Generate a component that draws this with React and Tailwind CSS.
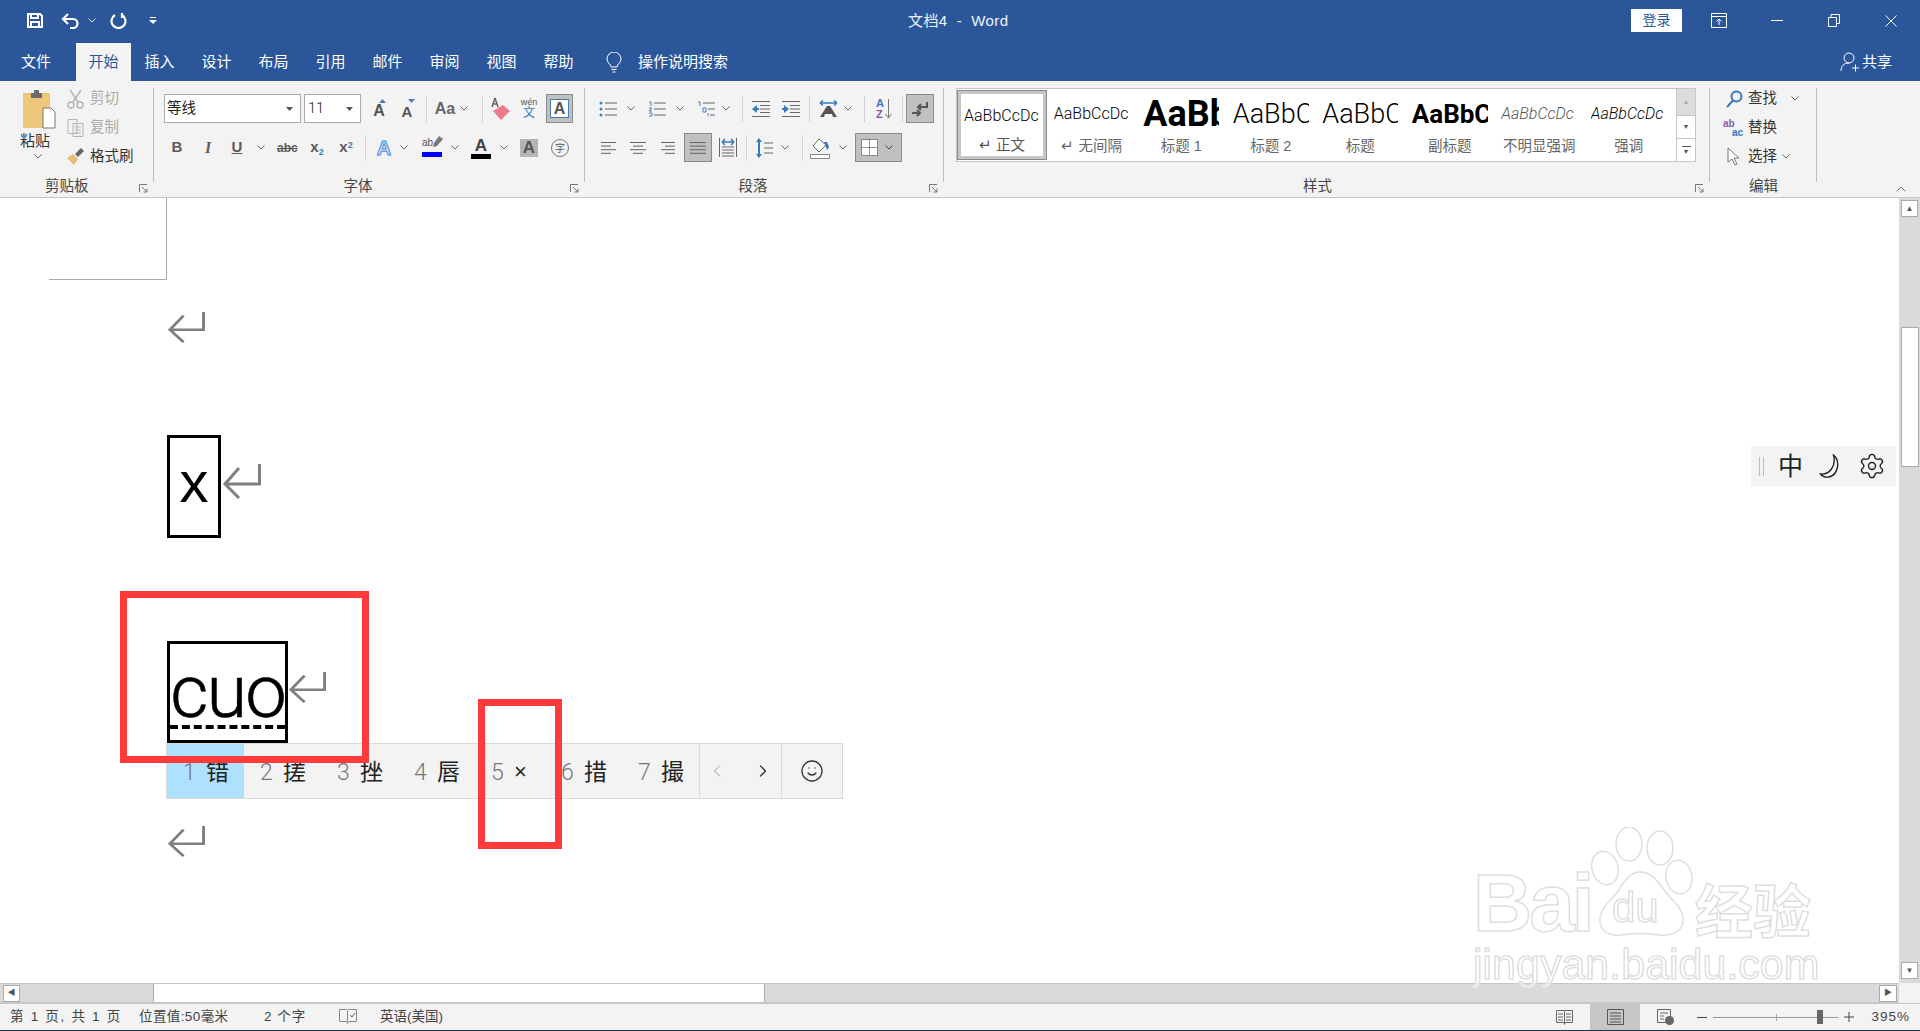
import { Settings, Smile, ChevronLeft, ChevronRight, ChevronUp } from "lucide-react";

const Chev = ({ className = "", color = "#666" }) => (
  <svg width="8" height="5" viewBox="0 0 8 5" className={`shrink-0 ${className}`} fill="none" stroke={color}>
    <path d="M.5.5 4 4 7.5.5" />
  </svg>
);

const Div = ({ className = "" }) => <div className={`w-px h-[26px] bg-[#d2d2d2] shrink-0 ${className}`} />;

const Launcher = () => (
  <svg width="9" height="9" viewBox="0 0 9 9" fill="none" stroke="#777" className="absolute right-[5px] top-[8px]">
    <path d="M.5 8V.5H8M3 3l5 5M8 4.500V8H4.500" />
  </svg>
);

const GroupLabel = ({ className = "", children }) => (
  <div className={`relative h-5 w-full flex items-center justify-center text-[14.5px] leading-none text-[#444] ${className}`}>
    {children}
    <Launcher />
  </div>
);

// grey pressed button on the ribbon
const Pressed = ({ className = "", children }) => (
  <div className={`h-[29px] bg-[#c0c0c0] border border-[#8a8a8a] flex items-center justify-center shrink-0 ${className}`}>{children}</div>
);

const Lines = ({ rows, w = 15 }) => (
  <svg width={w} height="14" viewBox={`0 0 ${w} 14`} stroke="#666" className="shrink-0">
    {rows.map(([a, b], i) => (
      <path key={i} d={`M${a} ${1.5 + i * 3.6}H${b}`} />
    ))}
  </svg>
);

const ReturnMark = ({ w = 38, h = 31, className = "" }) => (
  <svg width={w} height={h} viewBox="0 0 39 35" preserveAspectRatio="none" fill="none" stroke="#808080" strokeWidth="3" className={`shrink-0 ${className}`}>
    <path d="M37.500 0V20H3M17 4 3 20l14 14" />
  </svg>
);

const StylePreview = ({ className, children }) => (
  <div className="h-[50px] flex items-center justify-center">
    <div className={`w-[76px] overflow-hidden whitespace-nowrap font-['Roboto',sans-serif] ${className}`}>{children}</div>
  </div>
);

const styles = [
  ["text-[16px] font-light text-black", "AaBbCcDc", "↵ 无间隔"],
  ["text-[36px] font-bold text-black leading-none", "AaBbC", "标题 1"],
  ["text-[27px] font-light text-black", "AaBbC(", "标题 2"],
  ["text-[27px] font-light text-black", "AaBbC(", "标题"],
  ["text-[26px] font-bold text-black", "AaBbC(", "副标题"],
  ["text-[16px] italic font-light text-[#555]", "AaBbCcDc", "不明显强调"],
  ["text-[16px] italic font-light text-black", "AaBbCcDc", "强调"],
];

const tabs = ["插入", "设计", "布局", "引用", "邮件", "审阅", "视图", "帮助"];

const candidates = [
  ["1", "错", "w-[77px] bg-[#aee1fd]"],
  ["2", "搓", "w-[77px]"],
  ["3", "挫", "w-[77px]"],
  ["4", "唇", "w-[77px]"],
  ["5", "×", "w-[70px]"],
  ["6", "措", "w-[77px]"],
  ["7", "撮", "w-[77px]"],
];

function TitleBar() {
  return (
    <div className="h-[43px] pb-[2px] flex items-center text-white shrink-0">
      <svg width="16" height="15" viewBox="0 0 16 15" fill="none" stroke="#fff" strokeWidth="2" className="ml-[27px] shrink-0">
        <path d="M1 1h12l2 2v11H1zM4 1v4h7V1M4 14V9h8v5" />
      </svg>
      <svg width="19" height="16" viewBox="0 0 19 16" fill="none" stroke="#fff" strokeWidth="2.200" className="ml-[18px] shrink-0">
        <path d="M7 1 2 6l5 5M2 6h10a4.500 4.500 0 0 1 0 9H9" />
      </svg>
      <Chev className="ml-2" color="#dfe6f1" />
      <svg width="17" height="17" viewBox="0 0 17 17" fill="none" stroke="#fff" strokeWidth="2.200" className="ml-[14px] shrink-0">
        <path d="M5 3a7 7 0 1 0 7 0M12 1v5" />
      </svg>
      <svg width="8" height="7" viewBox="0 0 8 7" className="ml-[22px] shrink-0" fill="#fff">
        <path d="M1 0h6v1H1zM0 3h8L4 7z" />
      </svg>
      <div className="ml-[751px] w-[101px] whitespace-nowrap text-[15px] leading-none text-[#eef2f8] tracking-[0.4px]">文档4&nbsp; -&nbsp; Word</div>
      <div className="ml-[622px] w-[51px] h-[23px] bg-white text-[#2b579a] text-[14px] flex items-center justify-center shrink-0">登录</div>
      <svg width="16" height="15" viewBox="0 0 16 15" fill="none" stroke="#fff" className="ml-[29px] shrink-0">
        <path d="M.5.5h15v14H.5zM.5 3.500h15M8 12V6M5.500 8.500 8 6l2.500 2.500" />
      </svg>
      <div className="ml-[44px] w-3 h-px bg-white shrink-0" />
      <svg width="12" height="13" viewBox="0 0 12 13" fill="none" stroke="#fff" className="ml-[45px] shrink-0">
        <path d="M.5 3.500h8v9h-8zM3 3.500V.5h8.500v9H8.500" />
      </svg>
      <svg width="12" height="12" viewBox="0 0 12 12" fill="none" stroke="#fff" className="ml-[45px] shrink-0">
        <path d="m.5.5 11 11M11.500.5l-11 11" />
      </svg>
    </div>
  );
}

function TabRow() {
  return (
    <div className="h-[38px] flex items-center text-white text-[15px] shrink-0">
      <div className="ml-[21px] w-[31px] whitespace-nowrap">文件</div>
      <div className="ml-6 w-[55px] h-full bg-[#f3f3f3] text-[#2b579a] flex items-center justify-center">开始</div>
      {tabs.map((t) => (
        <div key={t} className="w-[57px] text-center">{t}</div>
      ))}
      <svg width="16" height="21" viewBox="0 0 16 21" fill="none" stroke="#fff" className="ml-[19px] shrink-0">
        <path d="M5 15c0-3-4-4-4-8a7 7 0 0 1 14 0c0 4-4 5-4 8zM5.500 17.500h5M6.500 20h3" />
      </svg>
      <div className="ml-4 whitespace-nowrap">操作说明搜索</div>
      <div className="ml-auto mr-[28px] flex items-center gap-[3px]">
        <svg width="19" height="20" viewBox="0 0 19 20" fill="none" stroke="#fff">
          <circle cx="9" cy="6" r="5" />
          <path d="M1 19c0-5 3-8 8-8M12 16h7M15.500 12.500V19.500" />
        </svg>
        <span>共享</span>
      </div>
    </div>
  );
}

function ClipboardGroup() {
  return (
    <div className="w-[153px] flex flex-col pt-[3px] shrink-0">
      <div className="flex h-[87px]">
        <div className="w-[67px] pl-5 flex flex-col">
          <svg width="34" height="39" viewBox="0 0 34 39" className="ml-[2px] mt-[6px] shrink-0">
            <path d="M1 3h27v35H1z" fill="#eec77a" />
            <path d="M9 3h11v5H9z" fill="#6b6b6b" />
            <path d="M12 0h5v4h-5z" fill="#6b6b6b" />
            <path d="M21 18h8l4 4v16H21z" fill="#fff" stroke="#777" />
          </svg>
          <div className="text-[15px] leading-none text-[#333] mt-[4px]">粘贴</div>
          <Chev className="ml-[14px] mt-[6px]" />
        </div>
        <div className="flex flex-col text-[14.5px] leading-none">
          <div className="h-[29px] flex items-center text-[#aaa]">
            <svg width="17" height="20" viewBox="0 0 17 20" fill="none" stroke="#b5b5b5" strokeWidth="1.500">
              <path d="M3 1l8 12M14 1 6 13" />
              <circle cx="4" cy="16" r="3" />
              <circle cx="13" cy="16" r="3" />
            </svg>
            <span className="ml-[6px]">剪切</span>
          </div>
          <div className="h-[29px] flex items-center text-[#aaa]">
            <svg width="17" height="18" viewBox="0 0 17 18" fill="none" stroke="#b5b5b5">
              <path d="M1 .5h9v14H1zM6 4.500h10v13H6zM8 8h6M8 11h6M8 14h6" />
            </svg>
            <span className="ml-[6px]">复制</span>
          </div>
          <div className="h-[29px] flex items-center text-[#333]">
            <svg width="17" height="17" viewBox="0 0 17 17">
              <path d="M0 10 6 6l5 5-4 6z" fill="#e8bd78" />
              <path d="M8 6l6-6 3 3-6 6z" fill="#666" />
            </svg>
            <span className="ml-[6px]">格式刷</span>
          </div>
        </div>
      </div>
      <div className="mt-[5px]">
        <div className="relative h-5 flex items-center text-[14.5px] leading-none text-[#444] pl-[45px]">
          剪贴板
          <Launcher />
        </div>
      </div>
    </div>
  );
}

function FontGroup() {
  return (
    <div className="w-[430px] flex flex-col pt-[13px] shrink-0">
      <div className="h-[29px] flex items-center">
        <div className="ml-[10px] w-[137px] h-full bg-white border border-[#ababab] flex items-center justify-between pl-[2px] pr-[7px] text-[14.5px] text-[#222]">
          等线
          <svg width="7" height="4" viewBox="0 0 7 4" fill="#555"><path d="M0 0h7L3.500 4z" /></svg>
        </div>
        <div className="ml-[3px] w-[57px] h-full bg-white border border-[#ababab] flex items-center justify-between pl-[3px] pr-[7px] text-[14.5px] text-[#222] font-['Roboto',sans-serif] font-light">
          11
          <svg width="7" height="4" viewBox="0 0 7 4" fill="#555"><path d="M0 0h7L3.500 4z" /></svg>
        </div>
        <div className="ml-2 w-5 h-5 text-[16px] text-[#555] flex items-end justify-center leading-none relative font-['Liberation_Sans',sans-serif] font-bold">
          A
          <svg width="7" height="4" viewBox="0 0 7 4" fill="#4a7ebb" className="absolute top-0 left-[10px]"><path d="M0 4h7L3.500 0z" /></svg>
        </div>
        <div className="ml-2 w-5 h-5 text-[15px] text-[#555] flex items-end justify-center leading-none relative font-['Liberation_Sans',sans-serif] font-bold">
          A
          <svg width="7" height="4" viewBox="0 0 7 4" fill="#4a7ebb" className="absolute top-0 left-[11px]"><path d="M0 0h7L3.500 4z" /></svg>
        </div>
        <Div className="ml-[9px]" />
        <div className="ml-[7px] w-[22px] text-[16px] text-[#666] text-center font-['Liberation_Sans',sans-serif] font-bold">Aa</div>
        <Chev className="ml-1" />
        <Div className="ml-[14px]" />
        <svg width="20" height="24" viewBox="0 0 20 24" className="ml-2 shrink-0">
          <path d="M2 14 12 8l7 6-9 9z" fill="#ec7b8b" />
          <path d="M4 1 1 10M4 1l3 9M2 7h4" stroke="#666" strokeWidth="1.500" fill="none" />
        </svg>
        <div className="ml-[9px] w-[18px] flex flex-col items-center leading-none">
          <span className="text-[9px] text-[#555] font-['Liberation_Sans',sans-serif]">wén</span>
          <span className="text-[12px] text-[#3a78bb]">文</span>
        </div>
        <Pressed className="ml-2 w-[27px]">
          <div className="w-[19px] h-[19px] bg-white border border-[#4a7ebb] flex items-center justify-center text-[16px] leading-none font-bold text-[#555] font-['Liberation_Sans',sans-serif]">A</div>
        </Pressed>
      </div>
      <div className="h-[29px] mt-[10px] flex items-center font-['Liberation_Sans',sans-serif] text-[#5a5a5a]">
        <div className="ml-[17px] w-3 text-[15px] font-bold text-center">B</div>
        <div className="ml-5 w-[10px] text-[16px] italic font-bold font-['Liberation_Serif',serif] text-center">I</div>
        <div className="ml-[18px] w-3 text-[15px] font-bold text-center underline">U</div>
        <Chev className="ml-[14px]" />
        <div className="ml-3 w-5 text-[12px] font-bold line-through text-center">abc</div>
        <div className="ml-[11px] w-[18px] text-[15px] font-bold text-center">x<sub className="text-[9px] text-[#3a78bb]">2</sub></div>
        <div className="ml-[11px] w-[18px] text-[15px] font-bold text-center">x<sup className="text-[9px] text-[#3a78bb]">2</sup></div>
        <Div className="ml-[10px]" />
        <div className="ml-[9px] w-[18px] text-[20px] leading-none font-bold text-[#cfe3f7] [-webkit-text-stroke:1px_#4a8fd6] text-center">A</div>
        <Chev className="ml-[7px]" />
        <div className="ml-[14px] w-5 flex flex-col items-start leading-none relative">
          <span className="text-[10px] text-[#555]">ab</span>
          <svg width="11" height="13" viewBox="0 0 11 13" className="absolute left-[10px] -top-[2px]">
            <path d="M7 0l4 3-6 7-4 1 1-4z" fill="#777" />
          </svg>
          <div className="w-5 h-[5px] bg-[#0000ff] mt-[4px]" />
        </div>
        <Chev className="ml-[9px]" />
        <div className="ml-3 w-5 flex flex-col items-center leading-none">
          <span className="text-[17px] font-bold text-[#444]">A</span>
          <div className="w-5 h-[5px] bg-black" />
        </div>
        <Chev className="ml-[9px]" />
        <div className="ml-3 w-[18px] h-[18px] bg-[#b5b5b5] flex items-center justify-center text-[17px] font-bold text-[#555]">A</div>
        <div className="ml-[13px] w-[18px] h-[18px] rounded-full border border-[#777] flex items-center justify-center text-[10px] text-[#555] font-['Noto_Sans_CJK_SC',sans-serif]">字</div>
      </div>
      <div className="mt-[14px]">
        <GroupLabel className="pr-[22px]">字体</GroupLabel>
      </div>
    </div>
  );
}

function ParagraphGroup() {
  const list = (
    <svg width="18" height="16" viewBox="0 0 18 16" className="shrink-0">
      <circle cx="2" cy="2" r="1.500" fill="#4a7ebb" />
      <circle cx="2" cy="8" r="1.500" fill="#4a7ebb" />
      <circle cx="2" cy="14" r="1.500" fill="#4a7ebb" />
      <path d="M6 2h12M6 8h12M6 14h12" stroke="#666" />
    </svg>
  );
  return (
    <div className="w-[358px] flex flex-col pt-[13px] shrink-0">
      <div className="h-[29px] flex items-center">
        <div className="ml-[14px]">{list}</div>
        <Chev className="ml-[10px]" />
        <svg width="18" height="16" viewBox="0 0 18 16" className="ml-[13px] shrink-0">
          <path d="M1 1h2v4M1 7h3L1 10h3M1 12h3v3H1" stroke="#4a7ebb" fill="none" />
          <path d="M6 2h12M6 8h12M6 14h12" stroke="#666" />
        </svg>
        <Chev className="ml-[10px]" />
        <svg width="18" height="16" viewBox="0 0 18 16" className="ml-[13px] shrink-0">
          <path d="M1 1h2v4M6 7h3v4H6zM11 12v3" stroke="#4a7ebb" fill="none" />
          <path d="M6 2h12M11 8h7M13 14h5" stroke="#666" />
        </svg>
        <Chev className="ml-[7px]" />
        <Div className="ml-3" />
        <svg width="18" height="16" viewBox="0 0 18 16" className="ml-[9px] shrink-0">
          <path d="M0 .5h18M8 4.500h10M8 8h10M8 11.500h10M0 15.500h18" stroke="#666" />
          <path d="M0 8l5-4v3h2v2H5v3z" fill="#3a78bb" />
        </svg>
        <svg width="18" height="16" viewBox="0 0 18 16" className="ml-3 shrink-0">
          <path d="M0 .5h18M8 4.500h10M8 8h10M8 11.500h10M0 15.500h18" stroke="#666" />
          <path d="M7 8 2 4v3H0v2h2v3z" fill="#3a78bb" />
        </svg>
        <Div className="ml-[9px]" />
        <svg width="19" height="17" viewBox="0 0 19 17" className="ml-[9px] shrink-0">
          <path d="M1 3h17M1 3l3-2.500M1 3l3 2.500M18 3l-3-2.500M18 3l-3 2.500" stroke="#3a78bb" strokeWidth="1.500" fill="none" />
          <path d="M1 17 8 6h3l7 11h-4l-1-3H6l-1 3z" fill="#555" />
        </svg>
        <Chev className="ml-[6px]" />
        <Div className="ml-3" />
        <div className="ml-[11px] w-4 flex items-center font-['Liberation_Sans',sans-serif] font-bold text-[11px] leading-[11px]">
          <div className="flex flex-col">
            <span className="text-[#3a78bb]">A</span>
            <span className="text-[#8a5aa8]">Z</span>
          </div>
          <svg width="7" height="20" viewBox="0 0 7 20" fill="none" stroke="#777" className="ml-[1px]">
            <path d="M3.500 0v19M.5 15l3 4 3-4" />
          </svg>
        </div>
        <Div className="ml-[10px]" />
        <Pressed className="ml-[3px] w-7">
          <svg width="18" height="16" viewBox="0 0 18 16" fill="none" stroke="#555" strokeWidth="2">
            <path d="M16 1v5H7M10 3 7 6l3 3M1 12h8M6 9l3 3-3 3" />
          </svg>
        </Pressed>
      </div>
      <div className="h-[29px] mt-[10px] flex items-center">
        <div className="ml-4"><Lines w={15} rows={[[0, 15], [0, 10], [0, 15], [0, 10]]} /></div>
        <div className="ml-[14px]"><Lines w={16} rows={[[0, 16], [3, 13], [0, 16], [3, 13]]} /></div>
        <div className="ml-[15px]"><Lines w={14} rows={[[0, 14], [4, 14], [0, 14], [4, 14]]} /></div>
        <Pressed className="ml-[9px] w-7">
          <Lines w={16} rows={[[0, 16], [0, 16], [0, 16], [0, 16]]} />
        </Pressed>
        <svg width="18" height="19" viewBox="0 0 18 19" className="ml-[7px] shrink-0">
          <path d="M.5 0v19M17.500 0v19M3 9h12M3 12h12M3 15h12M3 18h12" stroke="#666" />
          <path d="M3 4h12M3 4l3-3M3 4l3 3M15 4l-3-3M15 4l-3 3" stroke="#3a78bb" strokeWidth="1.500" fill="none" />
        </svg>
        <Div className="ml-[9px]" />
        <svg width="17" height="20" viewBox="0 0 17 20" className="ml-[9px] shrink-0">
          <path d="M8 5h9M8 10h9M8 15h9" stroke="#666" />
          <path d="M3 0 6 4H4v12h2l-3 4-3-4h2V4H0z" fill="#3a78bb" />
        </svg>
        <Chev className="ml-2" />
        <Div className="ml-[13px]" />
        <svg width="20" height="22" viewBox="0 0 20 22" className="ml-[7px] shrink-0">
          <path d="M9 2 3 9l6 6 7-7z" fill="#fff" stroke="#666" />
          <path d="M14 5h3l2 5-2 3z" fill="#3a78bb" />
          <path d="M.5 17.500h19v4H.5z" fill="#fff" stroke="#888" />
        </svg>
        <Chev className="ml-[9px]" />
        <Pressed className="ml-2 w-[47px] justify-between! pl-[5px] pr-[8px]">
          <svg width="17" height="17" viewBox="0 0 17 17" fill="#fff" stroke="#333" strokeDasharray="1 1">
            <path d="M.5.5h16v16H.5zM8.500.5v16M.5 8.500h16" />
          </svg>
          <Chev color="#444" />
        </Pressed>
      </div>
      <div className="mt-[14px]">
        <GroupLabel className="pr-[22px]">段落</GroupLabel>
      </div>
    </div>
  );
}

function StylesGroup() {
  return (
    <div className="w-[765px] flex flex-col pt-[7px] shrink-0">
      <div className="ml-3 w-[740px] h-[74px] bg-white border border-[#c6c6c6] flex">
        <div className="w-[90px] h-[70px] mt-px border border-[#8a8a8a] shrink-0 p-[3px] bg-[#c6c6c6]">
          <div className="h-full bg-white flex flex-col">
            <div className="h-[44px] flex items-center justify-center">
              <div className="w-[76px] overflow-hidden whitespace-nowrap text-[16px] font-light text-black font-['Roboto',sans-serif]">AaBbCcDc</div>
            </div>
            <div className="text-center text-[14.5px] leading-none text-[#555]">↵ 正文</div>
          </div>
        </div>
        {styles.map(([cls, sample, label]) => (
          <div key={label} className="w-[89.500px] shrink-0 flex flex-col items-center">
            <StylePreview className={cls}>{sample}</StylePreview>
            <div className="text-[14.5px] leading-none text-[#666] whitespace-nowrap">{label}</div>
          </div>
        ))}
        <div className="ml-auto w-[19px] flex flex-col border-l border-[#c6c6c6]">
          <div className="h-[26px] bg-[#dcdcdc] flex items-center justify-center text-[7px] text-[#aaa]">▲</div>
          <div className="h-[24px] border-y border-[#c6c6c6] flex items-center justify-center text-[7px] text-[#555]">▼</div>
          <div className="flex-1 flex flex-col items-center justify-center">
            <div className="w-[9px] h-px bg-[#555] mb-px" />
            <div className="text-[7px] leading-none text-[#555]">▼</div>
          </div>
        </div>
      </div>
      <div className="mt-[14px]">
        <GroupLabel className="pr-[18px]">样式</GroupLabel>
      </div>
    </div>
  );
}

function EditGroup() {
  return (
    <div className="w-[106px] flex flex-col pt-[3px] shrink-0 text-[14.5px] leading-none text-[#333]">
      <div className="h-[29px] flex items-center pl-4">
        <svg width="17" height="18" viewBox="0 0 17 18" fill="none" stroke="#3a78bb" strokeWidth="2">
          <circle cx="10.500" cy="6.500" r="5" />
          <path d="M7 10.500 1 17" />
        </svg>
        <span className="ml-[5px]">查找</span>
        <Chev className="ml-[14px]" />
      </div>
      <div className="h-[29px] flex items-center pl-[13px]">
        <div className="w-5 flex flex-col font-['Liberation_Sans',sans-serif] text-[10px] font-bold leading-[9px]">
          <span className="text-[#8a5aa8]">ab</span>
          <span className="text-[#3a78bb] text-right">ac</span>
        </div>
        <span className="ml-[5px]">替换</span>
      </div>
      <div className="h-[29px] flex items-center pl-[17px]">
        <svg width="13" height="19" viewBox="0 0 13 19" fill="#fff" stroke="#777">
          <path d="M1 1v14l4-3 3 6 2-1-3-6h5z" />
        </svg>
        <span className="ml-[8px]">选择</span>
        <Chev className="ml-[5px]" />
      </div>
      <div className="mt-[5px] pl-[39px] h-5 flex items-center text-[#444]">编辑</div>
    </div>
  );
}

function Ribbon() {
  return (
    <div className="h-[117px] bg-[#f3f3f3] border-b border-[#c6c6c6] flex shrink-0">
      <ClipboardGroup />
      <div className="w-px h-[94px] mt-[7px] bg-[#bdbdbd] shrink-0" />
      <FontGroup />
      <div className="w-px h-[94px] mt-[7px] bg-[#bdbdbd] shrink-0" />
      <ParagraphGroup />
      <div className="w-px h-[94px] mt-[7px] bg-[#bdbdbd] shrink-0" />
      <StylesGroup />
      <div className="w-px h-[94px] mt-[7px] bg-[#bdbdbd] shrink-0" />
      <EditGroup />
      <div className="w-px h-[94px] mt-[7px] bg-[#bdbdbd] shrink-0" />
      <div className="flex-1 flex items-end justify-end pr-[11px] pb-0">
        <ChevronUp size={16} strokeWidth={1.200} color="#555" />
      </div>
    </div>
  );
}

function Document() {
  return (
    <div className="flex-1 min-h-0 flex">
      <div className="flex-1 bg-white pl-[167px] flex flex-col overflow-hidden font-['Roboto',sans-serif]">
        <div className="w-[118px] h-[82px] -ml-[118px] border-r border-b border-[#aaa] shrink-0" />
        <ReturnMark className="mt-[32px]" />
        <div className="mt-[92px] flex items-start">
          <div className="w-[54px] h-[103px] border-[3px] border-black flex items-center justify-center text-[58px] leading-none text-black pb-[10px] font-['Liberation_Sans',sans-serif]">x</div>
          <ReturnMark w={39} h={35} className="ml-px mt-[29px]" />
        </div>
        <div className="mt-[103px] flex items-start">
          <div className="w-[121px] h-[102px] border-[3px] border-black flex flex-col">
            <div className="mt-[13px] h-[70px] text-[74px] font-light [-webkit-text-stroke:0.6px_black] leading-[70px] tracking-[-2px] text-black text-center whitespace-nowrap">cuo</div>
            <div className="-mt-[2px] border-b-4 border-dashed border-black" />
          </div>
          <ReturnMark className="mt-[31px]" />
        </div>
        <ReturnMark className="mt-[83px]" />
      </div>
      <div className="w-[21px] bg-[#dadada] flex flex-col items-center shrink-0">
        <div className="mt-[2px] w-[17px] h-[17px] bg-white border border-[#aaa] flex items-center justify-center text-[8px] text-[#555]">▲</div>
        <div className="mt-[110px] w-[18px] h-[140px] bg-white border border-[#aaa]" />
        <div className="mt-auto mb-[4px] w-[17px] h-[17px] bg-white border border-[#aaa] flex items-center justify-center text-[8px] text-[#555]">▼</div>
      </div>
    </div>
  );
}

function HScroll() {
  return (
    <div className="h-5 flex shrink-0">
      <div className="w-[1899px] bg-[#dadada] flex items-center border-y border-[#c6c6c6]">
        <div className="ml-[3px] w-[17px] h-[17px] bg-white border border-[#aaa] flex items-center justify-center text-[8px] text-[#555]">◀</div>
        <div className="ml-[133px] w-[612px] h-full bg-white border-x border-[#aaa]" />
        <div className="ml-auto mr-[2px] w-[18px] h-[17px] bg-white border border-[#aaa] flex items-center justify-center text-[8px] text-[#555]">▶</div>
      </div>
      <div className="flex-1 bg-[#f3f3f3]" />
    </div>
  );
}

function StatusBar() {
  return (
    <div className="h-7 bg-[#f3f3f3] border-t border-[#c6c6c6] border-b border-b-[#1c3348] flex items-center text-[13.5px] text-[#444] shrink-0">
      <div className="ml-[10px] w-[109px] whitespace-nowrap tracking-[1.7px]">第 1 页, 共 1 页</div>
      <div className="ml-5 w-[101px] whitespace-nowrap tracking-[0.4px]">位置值:50毫米</div>
      <div className="ml-6 w-[44px] whitespace-nowrap tracking-[1px]">2 个字</div>
      <svg width="18" height="16" viewBox="0 0 18 16" fill="none" stroke="#888" className="ml-[31px] shrink-0">
        <path d="M.5.5h7l1 1 1-1h8v12h-8l-1 2-1-2h-7zM8.500 1.500v11" />
        <path d="m11 6 2 2 3-4" stroke="#666" />
      </svg>
      <div className="ml-[23px] whitespace-nowrap">英语(美国)</div>
      <svg width="17" height="15" viewBox="0 0 17 15" fill="none" stroke="#666" className="ml-auto shrink-0">
        <path d="M.5.5h7.500l.5 1 .5-1h7.500v12h-7.500l-.5 2-.5-2H.5zM8.500 1.500v11M2 4h5M2 7h5M2 10h5M10 4h5M10 7h5M10 10h5" />
      </svg>
      <div className="ml-[17px] w-[50px] h-full bg-[#c6c6c6] flex items-center justify-center shrink-0">
        <svg width="17" height="16" viewBox="0 0 17 16" fill="none" stroke="#555">
          <path d="M.5.5h16v15H.5zM3 4h11M3 7h11M3 10h11M3 13h11" />
        </svg>
      </div>
      <svg width="17" height="16" viewBox="0 0 17 16" className="ml-[17px] shrink-0">
        <path d="M.5.5h13v13H.5zM3 4h8M3 7h4M3 10h4" fill="none" stroke="#666" />
        <circle cx="12.500" cy="11.500" r="4.500" fill="#666" />
      </svg>
      <div className="ml-[23px] w-[10px] h-px bg-[#444] shrink-0" />
      <div className="ml-[6px] w-[125px] h-px bg-[#999] relative shrink-0">
        <div className="absolute left-[63px] -top-[3px] w-px h-[7px] bg-[#aaa]" />
        <div className="absolute left-[104px] -top-[7px] w-[6px] h-[14px] bg-[#666]" />
      </div>
      <svg width="10" height="10" viewBox="0 0 10 10" stroke="#444" className="ml-[6px] shrink-0">
        <path d="M0 5h10M5 0v10" />
      </svg>
      <div className="ml-[17px] mr-[10px] w-[39px] text-right tracking-[1px] whitespace-nowrap font-['Liberation_Sans',sans-serif]">395%</div>
    </div>
  );
}

function Overlays() {
  return (
    <>
      {/* input method candidate bar */}
      <div className="absolute left-[166px] top-[743px] w-[677px] h-[56px] bg-[#f3f3f3] border border-[#dadada] flex items-stretch text-[23px] leading-none">
        {candidates.map(([n, c, cls]) => (
          <div key={n} className={`${cls} pl-4 pt-[2px] flex items-center shrink-0`}>
            <span className="w-3 text-[#777] font-['Roboto',sans-serif] font-light">{n}</span>
            <span className={`ml-[11px] text-[#222] ${c === "×" ? "text-[22px]" : ""}`}>{c}</span>
          </div>
        ))}
        <div className="w-[82px] border-l border-[#dadada] flex items-center shrink-0">
          <ChevronLeft size={20} strokeWidth={1.200} color="#999" className="ml-[7px]" />
          <ChevronRight size={20} strokeWidth={1.500} color="#333" className="ml-[26px]" />
        </div>
        <div className="flex-1 border-l border-[#dadada] flex items-center justify-center">
          <Smile size={24} strokeWidth={1.300} color="#333" />
        </div>
      </div>

      {/* red annotation boxes */}
      <div className="absolute left-[120px] top-[591px] w-[249px] h-[172px] border-[7px] border-[#fe3a3a]" />
      <div className="absolute left-[478px] top-[699px] w-[84px] h-[150px] border-[7px] border-[#fe3a3a]" />

      {/* floating input method toolbar */}
      <div className="absolute left-[1751px] top-[446px] w-[145px] h-10 bg-[#f3f3f3] flex items-center">
        <div className="ml-[8px] w-[5px] h-[19px] border-x border-[#bbb]" />
        <span className="ml-[14px] text-[25px] leading-none text-[#222]">中</span>
        <svg width="24" height="25" viewBox="0 0 23 25" fill="none" stroke="#222" strokeWidth="1.400" className="ml-[16px]">
          <path d="M14 1c7 6 5 20-5 22-3 .5-6-.5-8-3 9 1 16-8 13-19z" />
        </svg>
        <Settings size={28} strokeWidth={1.200} color="#222" className="ml-[15px]" />
      </div>

      {/* watermark */}
      <div className="absolute left-[1473px] top-[827px] w-[350px] h-[165px] pointer-events-none blur-[0.5px] font-['Liberation_Sans',sans-serif] [-webkit-text-stroke:1.500px_#dedede] text-white/60">
        <div className="flex items-end h-[112px]">
          <span className="text-[82px] leading-[82px] font-bold tracking-[-3px] w-[117px] -mb-[5px] whitespace-nowrap">Bai</span>
          <div className="relative w-[105px] h-[112px]">
            <svg width="105" height="112" viewBox="0 0 105 112" fill="white" stroke="#dedede" strokeWidth="1.500" className="absolute inset-0">
              <ellipse cx="15" cy="41" rx="13" ry="17" transform="rotate(-15 15 41)" />
              <ellipse cx="39" cy="17" rx="13" ry="17" />
              <ellipse cx="70" cy="21" rx="13" ry="17" />
              <ellipse cx="89" cy="50" rx="13" ry="17" transform="rotate(-10 89 50)" />
              <path d="M50 45c-13 0-18 15-25 23-9 9-16 17-15 27 1 10 10 14 20 13 13-2 27-2 40 0 10 1 22-3 23-13 1-10-6-18-14-26-8-8-14-24-29-24z" />
            </svg>
            <span className="absolute left-[22px] bottom-[10px] text-[42px] leading-none whitespace-nowrap">du</span>
          </div>
          <span className="text-[58px] leading-[62px] font-bold whitespace-nowrap font-['Noto_Sans_CJK_SC',sans-serif]">经验</span>
        </div>
        <div className="mt-px text-[43px] leading-[48px] whitespace-nowrap">jingyan.baidu.com</div>
      </div>
    </>
  );
}

export default function App() {
  return (
    <div className="relative w-[1920px] h-[1031px] overflow-hidden flex flex-col bg-white font-['Liberation_Sans','Noto_Sans_CJK_SC',sans-serif]">
      <div className="bg-[#2b579a] shrink-0">
        <TitleBar />
        <TabRow />
      </div>
      <Ribbon />
      <Document />
      <HScroll />
      <StatusBar />
      <Overlays />
    </div>
  );
}
